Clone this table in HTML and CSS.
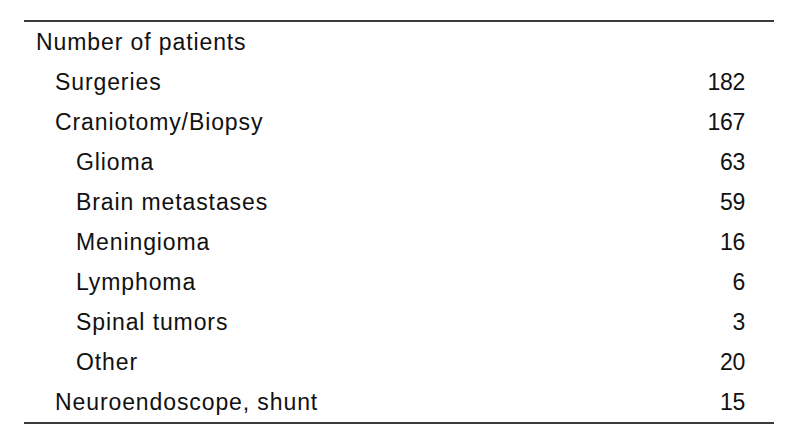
FILE: index.html
```html
<!DOCTYPE html>
<html>
<head>
<meta charset="utf-8">
<link rel="stylesheet" href="styles.css">
</head>
<body>
<table class="data">
  <tbody>
    <tr><td class="label l0">Number of patients</td><td class="num"></td></tr>
    <tr><td class="label l1">Surgeries</td><td class="num">182</td></tr>
    <tr><td class="label l1">Craniotomy/Biopsy</td><td class="num">167</td></tr>
    <tr><td class="label l2">Glioma</td><td class="num">63</td></tr>
    <tr><td class="label l2">Brain metastases</td><td class="num">59</td></tr>
    <tr><td class="label l2">Meningioma</td><td class="num">16</td></tr>
    <tr><td class="label l2">Lymphoma</td><td class="num">6</td></tr>
    <tr><td class="label l2">Spinal tumors</td><td class="num">3</td></tr>
    <tr><td class="label l2">Other</td><td class="num">20</td></tr>
    <tr><td class="label l1">Neuroendoscope, shunt</td><td class="num">15</td></tr>
  </tbody>
</table>
</body>
</html>
```

FILE: styles.css
```css
html, body {
  margin: 0;
  padding: 0;
  background: #ffffff;
}
body {
  padding: 20px 0 0 24px;
  font-family: "Liberation Sans", Arial, sans-serif;
  color: #111111;
}
.data {
  width: 750px;
  border-collapse: collapse;
  border-top: 2px solid #3a3a3a;
  border-bottom: 2px solid #3a3a3a;
  font-size: 23px;
}
.data td {
  height: 40px;
  padding: 0;
  vertical-align: middle;
  line-height: 1;
}
.label {
  letter-spacing: 0.9px;
}
.l0 { padding-left: 12px !important; }
.l1 { padding-left: 31px !important; }
.l2 { padding-left: 52px !important; }
.num {
  text-align: right;
  padding-right: 29px !important;
  letter-spacing: -0.3px;
}
```
